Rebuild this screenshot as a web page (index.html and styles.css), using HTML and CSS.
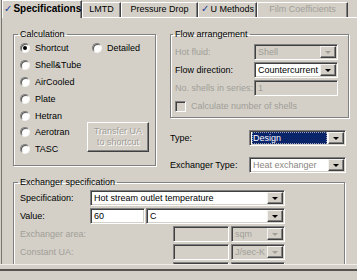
FILE: index.html
```html
<!DOCTYPE html>
<html lang="en">
<head>
    <meta charset="UTF-8">
    <title>Exchanger - Specifications</title>
    <link rel="stylesheet" href="styles.css">
</head>
<body>
    <div class="viewport">
        <!-- Tabs -->
        <div class="tabs">
            <div class="tab tab-spec active"><span class="tick">✓</span>Specifications</div>
            <div class="tab tab-lmtd">LMTD</div>
            <div class="tab tab-dp">Pressure Drop</div>
            <div class="tab tab-u"><span class="tick">✓</span>U Methods</div>
            <div class="tab tab-film disabled">Film Coefficients</div>
        </div>

        <div class="page">
            <div class="top">
                <!-- Calculation -->
                <fieldset class="group calc">
                    <legend>Calculation</legend>
                    <div class="calc-grid">
                        <div class="radios">
                            <label class="opt"><span class="radio checked"></span>Shortcut</label>
                            <label class="opt"><span class="radio"></span>Shell&amp;Tube</label>
                            <label class="opt"><span class="radio"></span>AirCooled</label>
                            <label class="opt"><span class="radio"></span>Plate</label>
                            <label class="opt"><span class="radio"></span>Hetran</label>
                            <label class="opt"><span class="radio"></span>Aerotran</label>
                            <label class="opt"><span class="radio"></span>TASC</label>
                        </div>
                        <div class="calc-side">
                            <label class="opt detailed"><span class="radio"></span>Detailed</label>
                            <button class="btn" disabled>Transfer UA<br>to shortcut</button>
                        </div>
                    </div>
                </fieldset>

                <div class="right">
                    <!-- Flow arrangement -->
                    <fieldset class="group flow">
                        <legend>Flow arrangement</legend>
                        <div class="frow">
                            <span class="lbl off">Hot fluid:</span>
                            <div class="field combo off"><span class="val">Shell</span><span class="drop"></span></div>
                        </div>
                        <div class="frow">
                            <span class="lbl">Flow direction:</span>
                            <div class="field combo"><span class="val">Countercurrent</span><span class="drop"></span></div>
                        </div>
                        <div class="frow">
                            <span class="lbl off">No. shells in series:</span>
                            <div class="field combo off"><span class="val">1</span></div>
                        </div>
                        <div class="frow">
                            <span class="check"></span>
                            <span class="off">Calculate number of shells</span>
                        </div>
                    </fieldset>

                    <div class="trow type-row">
                        <span class="tlbl">Type:</span>
                        <div class="field combo wide"><span class="val selected">Design</span><span class="drop"></span></div>
                    </div>
                    <div class="trow exch-row">
                        <span class="tlbl">Exchanger Type:</span>
                        <div class="field combo wide"><span class="val grey">Heat exchanger</span><span class="drop"></span></div>
                    </div>
                </div>
            </div>

            <!-- Exchanger specification -->
            <fieldset class="group spec">
                <legend>Exchanger specification</legend>
                <div class="srow">
                    <span class="slbl">Specification:</span>
                    <div class="field combo w-spec"><span class="val">Hot stream outlet temperature</span><span class="drop"></span></div>
                </div>
                <div class="srow">
                    <span class="slbl">Value:</span>
                    <div class="field w-value"><span class="val">60</span></div>
                    <div class="field combo w-unit"><span class="val">C</span><span class="drop"></span></div>
                </div>
                <div class="srow">
                    <span class="slbl long off">Exchanger area:</span>
                    <div class="field off w-small"></div>
                    <div class="field combo off w-su"><span class="val">sqm</span><span class="drop"></span></div>
                </div>
                <div class="srow">
                    <span class="slbl long off">Constant UA:</span>
                    <div class="field off w-small"></div>
                    <div class="field combo off w-su"><span class="val">J/sec-K</span><span class="drop"></span></div>
                </div>
                <div class="srow">
                    <span class="slbl long"></span>
                    <div class="field w-small"></div>
                    <div class="field combo w-su"><span class="drop"></span></div>
                </div>
            </fieldset>
        </div>
    </div>
    <div class="hbar"><div class="hbar-line"></div></div>
</body>
</html>
```

FILE: styles.css
```css
* {
    margin: 0;
    padding: 0;
    box-sizing: border-box;
}

html, body {
    width: 357px;
    height: 280px;
    overflow: hidden;
}

body {
    font-family: "Liberation Sans", Arial, sans-serif;
    font-size: 9px;
    color: #000;
    background-color: #d4d0c8;
}

.viewport {
    height: 264px;
    margin-left: 1px;
    border-left: 1px solid #77756f;
    overflow: hidden;
}

/* tabs */
.tabs {
    display: flex;
    align-items: flex-end;
    height: 18px;
    box-shadow: inset 0 -1px 0 #fff;
}

.tab {
    height: 15px;
    margin-bottom: 1px;
    padding-bottom: 2px;
    line-height: 12px;
    text-align: center;
    white-space: nowrap;
    border-top: 1px solid #fff;
    border-left: 1px solid #fff;
    border-right: 1px solid #404040;
    box-shadow: inset -1px 0 0 #808080;
}

.tab.active {
    height: 18px;
    margin-bottom: 0;
    padding-bottom: 0;
    line-height: 16px;
    font-size: 10px;
    font-weight: bold;
    text-align: left;
    padding-left: 1px;
    background-color: #d4d0c8;
}

.tab.disabled {
    color: #a19e97;
}

.tab-spec { width: 80px; }
.tab-lmtd { width: 39px; }
.tab-dp { width: 77px; }
.tab-u { width: 59px; }
.tab-film { width: 91px; }

.tick {
    font-family: "DejaVu Sans", sans-serif;
    font-size: 10px;
    font-weight: bold;
    color: #1f3b9c;
    margin-right: 1px;
}

/* page */
.page {
    padding: 11px 0 0 11px;
}

.top {
    display: flex;
    align-items: flex-start;
}

.group {
    border: 1px solid #808080;
    box-shadow: inset 1px 1px 0 #fff, 1px 1px 0 #fff;
}

.group legend {
    line-height: 11px;
    padding: 0 2px;
    margin-left: -2px;
}

.off {
    color: #a19e97;
}

/* calculation */
.calc {
    width: 141px;
    padding: 0 6px 7px 6px;
}

.calc-grid {
    display: grid;
    grid-template-columns: 67px 1fr;
}

.opt {
    display: flex;
    align-items: center;
    height: 16.8px;
    white-space: nowrap;
}

.radio {
    position: relative;
    width: 10px;
    height: 10px;
    margin-right: 5px;
    border-radius: 50%;
    background: #fff;
    border: 1px solid;
    border-color: #808080 #f4f3ef #f4f3ef #808080;
    box-shadow: inset 1px 1px 0 #5a5955;
}

.radio.checked::after {
    content: "";
    position: absolute;
    left: 2px;
    top: 2px;
    width: 4px;
    height: 4px;
    border-radius: 50%;
    background: #000;
}

.calc-side {
    display: flex;
    flex-direction: column;
}

.detailed {
    margin-left: 5px;
}

.btn {
    width: 62px;
    height: 30px;
    margin-top: auto;
    margin-bottom: 6px;
    font: inherit;
    line-height: 11px;
    color: #a19e97;
    text-shadow: 1px 1px 0 #fff;
    background: #d4d0c8;
    border: 1px solid;
    border-color: #fff #404040 #404040 #fff;
    box-shadow: inset -1px -1px 0 #808080;
}

/* right column */
.right {
    width: 179px;
    margin-left: 14px;
}

.flow {
    padding: 4px 0 3px 4px;
}

.frow {
    display: flex;
    align-items: center;
    height: 16px;
    margin-bottom: 2px;
}

.frow:last-child {
    margin-bottom: 0;
}

.lbl {
    width: 79px;
    white-space: nowrap;
}

.check {
    width: 11px;
    height: 11px;
    margin-right: 5px;
    border: 1px solid;
    border-color: #808080 #fff #fff #808080;
    box-shadow: inset 1px 1px 0 #404040;
}

/* sunken edit / combo */
.field {
    display: flex;
    align-items: center;
    height: 16px;
    background: #fff;
    border: 1px solid;
    border-color: #808080 #fff #fff #808080;
    box-shadow: inset 1px 1px 0 #404040, inset -1px -1px 0 #d4d0c8;
}

.field.off {
    background: #d4d0c8;
}

.flow .field {
    width: 84px;
}

.val {
    flex: 1;
    padding-left: 3px;
    line-height: 12px;
    white-space: nowrap;
    overflow: hidden;
}

.val.selected {
    margin: 0 1px 0 2px;
    padding-left: 1px;
    color: #fff;
    background: #0a246a;
    outline: 1px dotted #9aa0b8;
    outline-offset: -1px;
}

.val.grey {
    color: #8a8780;
}

.drop {
    display: flex;
    align-items: center;
    justify-content: center;
    width: 16px;
    height: 12px;
    margin: 0 1px 0 auto;
    background: #d4d0c8;
    border: 1px solid;
    border-color: #f4f3ef #404040 #404040 #f4f3ef;
    box-shadow: inset -1px -1px 0 #808080;
}

.drop::after {
    content: "";
    border-left: 3px solid transparent;
    border-right: 3px solid transparent;
    border-top: 3px solid #000;
}

.off .drop::after {
    border-top-color: #a19e97;
}

.trow {
    display: flex;
    align-items: center;
    height: 16px;
}

.type-row {
    margin-top: 12px;
}

.exch-row {
    margin-top: 11px;
}

.tlbl {
    width: 79px;
    white-space: nowrap;
}

.wide {
    width: 97px;
}

/* exchanger specification */
.spec {
    width: 332px;
    margin-top: 4px;
    padding: 2px 0 0 6px;
}

.srow {
    display: flex;
    align-items: center;
    gap: 1px;
    height: 16px;
    margin-bottom: 2px;
}

.slbl {
    width: 69px;
    white-space: nowrap;
}

.slbl.long {
    width: 152px;
}

.w-spec { width: 195px; }
.w-value { width: 55px; }
.w-unit { width: 139px; }
.w-small { width: 56px; margin-right: 1px; }
.w-su { width: 54px; }

/* bottom frame */
.hbar {
    height: 16px;
    border-top: 1px solid #efede7;
    padding-top: 4px;
}

.hbar-line {
    border-top: 2px solid #55544f;
}
```
